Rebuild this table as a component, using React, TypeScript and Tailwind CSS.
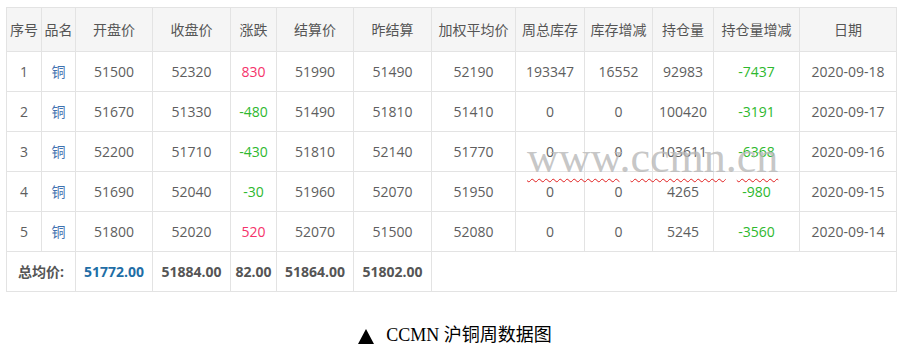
import React from 'react';

type Row = (string | number)[];

const HEADERS = ['序号', '品名', '开盘价', '收盘价', '涨跌', '结算价', '昨结算', '加权平均价', '周总库存', '库存增减', '持仓量', '持仓量增减', '日期'];
const WIDTHS = ['w-[35px]', 'w-[34px]', 'w-[77px]', 'w-[78px]', 'w-[46px]', 'w-[77px]', 'w-[78px]', 'w-[84px]', 'w-[69px]', 'w-[68px]', 'w-[61px]', 'w-[86px]', 'w-[97px]'];

const ROWS: Row[] = [
  [1, '铜', 51500, 52320, 830, 51990, 51490, 52190, 193347, 16552, 92983, -7437, '2020-09-18'],
  [2, '铜', 51670, 51330, -480, 51490, 51810, 51410, 0, 0, 100420, -3191, '2020-09-17'],
  [3, '铜', 52200, 51710, -430, 51810, 52140, 51770, 0, 0, 103611, -6368, '2020-09-16'],
  [4, '铜', 51690, 52040, -30, 51960, 52070, 51950, 0, 0, 4265, -980, '2020-09-15'],
  [5, '铜', 51800, 52020, 520, 52070, 51500, 52080, 0, 0, 5245, -3560, '2020-09-14'],
];

const TOTALS = ['51772.00', '51884.00', '82.00', '51864.00', '51802.00'];

const cellColor = (col: number, v: string | number) => {
  if (col === 1) return 'text-[#3f72b0]';
  if (col === 4 || col === 11) {
    return Number(v) < 0 ? 'text-[#2eb82e]' : 'text-[#f5336b]';
  }
  return 'text-[#5e5e5e]';
};

const App: React.FC = () => {
  return (
    <div className="relative w-[904px] h-[350px] bg-white pt-[7px] pl-[6px] font-['Open_Sans','Noto_Sans_CJK_SC',sans-serif] text-[14px]">
      <table className="table-fixed border-collapse w-[890px] text-center">
        <colgroup>
          {WIDTHS.map((w, i) => (
            <col key={i} className={w} />
          ))}
        </colgroup>
        <thead>
          <tr className="h-[44px] bg-[#f5f5f5]">
            {HEADERS.map((h, i) => (
              <th key={i} className="border border-[#e3e3e3] font-normal text-[#555] p-0 whitespace-nowrap">
                {h}
              </th>
            ))}
          </tr>
        </thead>
        <tbody>
          {ROWS.map((row, r) => (
            <tr key={r} className="h-[40px]">
              {row.map((v, c) => (
                <td key={c} className={`border border-[#e3e3e3] p-0 ${cellColor(c, v)}`}>
                  {v}
                </td>
              ))}
            </tr>
          ))}
          <tr className="h-[40px] font-bold">
            <td colSpan={2} className="border border-[#e3e3e3] p-0 text-[#555]">总均价:</td>
            {TOTALS.map((t, i) => (
              <td key={i} className={`border border-[#e3e3e3] p-0 ${i === 0 ? 'text-[#1f6ea6]' : 'text-[#555]'}`}>
                {t}
              </td>
            ))}
            <td colSpan={6} className="border border-[#e3e3e3] p-0"></td>
          </tr>
        </tbody>
      </table>

      {/* watermark */}
      <div className="absolute left-[527px] top-[136px] font-['Liberation_Serif',serif] text-[44px] leading-none text-[#b8b8b8]/80 pointer-events-none">
        <span className="underline decoration-wavy decoration-[#e02020] decoration-1 underline-offset-[6px]">www</span>.
        <span className="underline decoration-wavy decoration-[#e02020] decoration-1 underline-offset-[6px]">ccmn</span>.
        <span className="underline decoration-wavy decoration-[#e02020] decoration-1 underline-offset-[6px]">cn</span>
      </div>

      <div className="mt-[30px] flex justify-center items-center gap-[12px] font-['Liberation_Serif','Noto_Sans_CJK_SC',serif] text-[18px] text-black">
        <svg width="16" height="15" viewBox="0 0 16 15" className="mt-[1px]">
          <polygon points="8,0 16,15 0,15" fill="#000" />
        </svg>
        <span>CCMN 沪铜周数据图</span>
      </div>
    </div>
  );
};

export default App;
